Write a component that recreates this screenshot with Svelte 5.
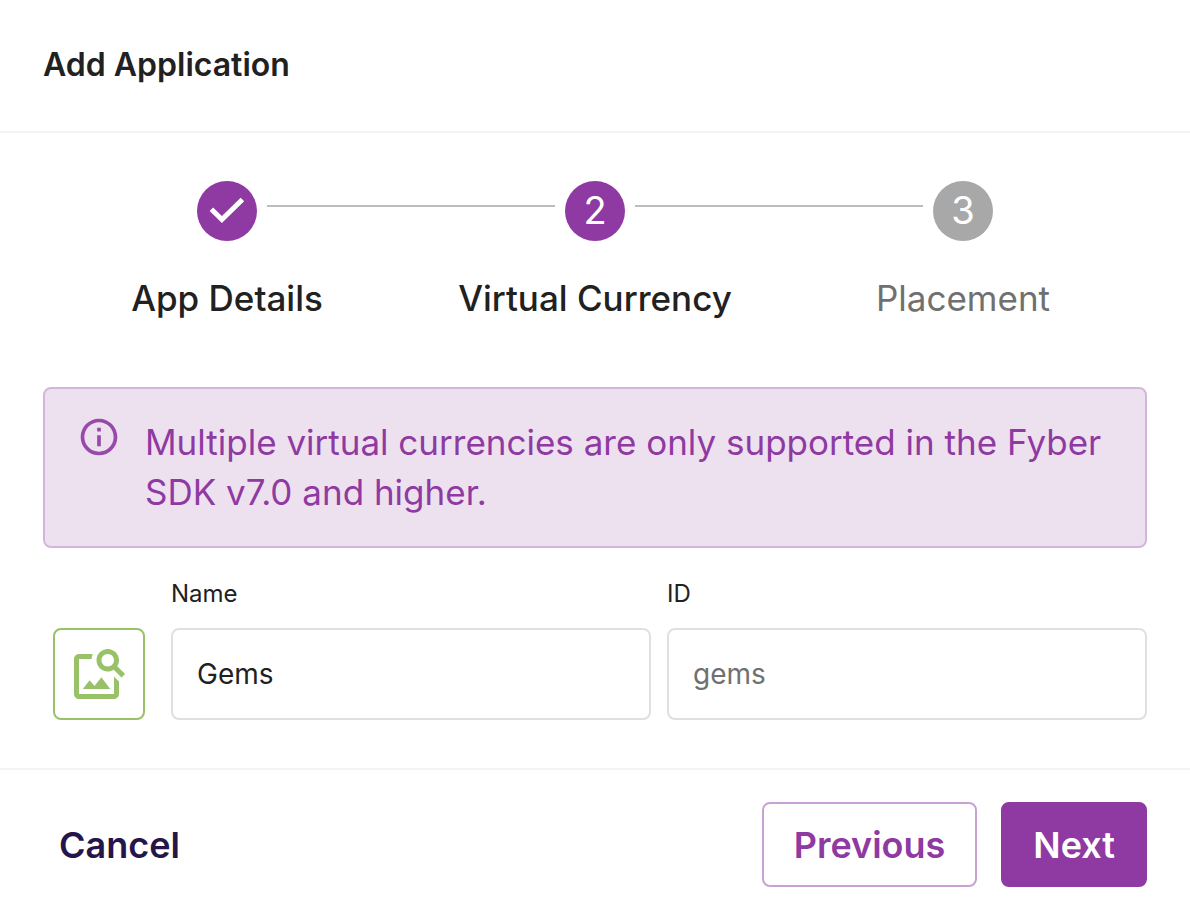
<script lang="ts">
    type Step = { label: string, state: "done" | "active" | "pending" }

    const steps: Step[] = [
        { label: "App Details", state: "done" },
        { label: "Virtual Currency", state: "active" },
        { label: "Placement", state: "pending" },
    ]

    let name = $state("Gems")
    let currencyId = $state("")
</script>

<form class="dialog" onsubmit={(e) => e.preventDefault()}>
    <header>
        <h1>Add Application</h1>
    </header>

    <main>
        <ol class="stepper">
            {#each steps as step, i}
                <li class="step {step.state}">
                    <div class="track">
                        <span class="line" class:hidden={i == 0}></span>
                        <span class="circle">
                            {#if step.state == "done"}
                                <svg viewBox="0 0 48 48" width="48" height="48" aria-hidden="true">
                                    <path class="tick" d="M8.4 23.2 18.9 33.5 39.4 13.5" />
                                </svg>
                            {:else}
                                {i + 1}
                            {/if}
                        </span>
                        <span class="line" class:hidden={i == steps.length - 1}></span>
                    </div>
                    <span class="step-label">{step.label}</span>
                </li>
            {/each}
        </ol>

        <div class="alert" role="note">
            <svg viewBox="0 0 24 24" width="44" height="44" aria-hidden="true">
                <path d="M11 7h2v2h-2zm0 4h2v6h-2zm1-9C6.48 2 2 6.48 2 12s4.48 10 10 10 10-4.48 10-10S17.52 2 12 2zm0 18c-4.41 0-8-3.59-8-8s3.59-8 8-8 8 3.59 8 8-3.59 8-8 8z" />
            </svg>
            <p>Multiple virtual currencies are only supported in the Fyber SDK v7.0 and higher.</p>
        </div>

        <div class="fields">
            <button type="button" class="image-button" aria-label="Choose image">
                <svg viewBox="0 0 24 24" width="60" height="60" aria-hidden="true">
                    <path d="M18 13v7H4V6h5.02c.05-.71.22-1.38.48-2H4c-1.1 0-2 .9-2 2v14c0 1.1.9 2 2 2h14c1.1 0 2-.9 2-2v-5l-2-2zm-1.5 5h-11l2.75-3.53 1.96 2.36 2.75-3.54L16.5 18zm2.8-9.11c.44-.7.7-1.51.7-2.39C20 4.01 17.99 2 15.5 2S11 4.01 11 6.5s2.01 4.5 4.49 4.5c.88 0 1.7-.26 2.39-.7L21 13.42 22.42 12 19.3 8.89zM15.5 9C14.12 9 13 7.88 13 6.5S14.12 4 15.5 4 18 5.12 18 6.5 16.88 9 15.5 9z" />
                </svg>
            </button>
            <div class="field">
                <label for="currency-name">Name</label>
                <input id="currency-name" type="text" bind:value={name} />
            </div>
            <div class="field">
                <label for="currency-id">ID</label>
                <input id="currency-id" type="text" placeholder="gems" bind:value={currencyId} />
            </div>
        </div>
    </main>

    <footer>
        <button type="button" class="btn text">Cancel</button>
        <div class="actions">
            <button type="button" class="btn outlined">Previous</button>
            <button type="submit" class="btn filled">Next</button>
        </div>
    </footer>
</form>

<style>
    :global(body) {
        background: #fff;
    }

    .dialog {
        font-family: Inter, "Liberation Sans", sans-serif;
        color: #212121;
    }

    .dialog * {
        box-sizing: border-box;
    }

    header {
        padding: 45px 43px 46px;
        border-bottom: 2px solid #f4f4f4;
    }

    h1 {
        margin: 0;
        font-size: 32px;
        line-height: 40px;
        font-weight: 600;
    }

    main {
        padding: 48px 43px;
    }

    .stepper {
        display: flex;
        margin: 0 0 64px;
        padding: 0;
        list-style: none;
    }

    .step {
        flex: 1;
        display: flex;
        flex-direction: column;
        align-items: center;
        gap: 32px;
    }

    .track {
        display: flex;
        gap: 10px;
        width: 100%;
    }

    .line {
        flex: 1;
        height: 2px;
        margin-top: 24px;
        background: #bdbdbd;
    }

    .line.hidden {
        visibility: hidden;
    }

    .circle {
        display: flex;
        align-items: center;
        justify-content: center;
        width: 60px;
        height: 60px;
        padding-bottom: 2px;
        border-radius: 50%;
        background: #8e3aa2;
        color: #fff;
        font-size: 38px;
    }

    svg {
        display: block;
        flex: none;
        fill: currentColor;
    }

    .tick {
        fill: none;
        stroke: currentColor;
        stroke-width: 5;
    }

    .step-label {
        font-size: 35px;
        line-height: 50px;
        font-weight: 500;
    }

    .pending .circle {
        background: #a8a8a8;
    }

    .pending .step-label {
        color: #707070;
        font-weight: 400;
    }

    .alert {
        display: flex;
        align-items: flex-start;
        gap: 24px;
        padding: 26px 32px 29px;
        border: 2px solid #d4b6dc;
        border-radius: 8px;
        background: #eee1ef;
        color: #8e3aa2;
    }

    .alert svg {
        opacity: 0.9;
    }

    .alert p {
        margin: 0;
        padding-top: 2px;
        font-size: 35px;
        line-height: 50px;
    }

    .fields {
        display: flex;
        align-items: flex-end;
        gap: 16px;
        margin-top: 30px;
    }

    .image-button {
        display: flex;
        align-items: center;
        justify-content: center;
        flex: none;
        width: 92px;
        height: 92px;
        margin: 0 10px;
        padding: 0;
        border: 2px solid #99c268;
        border-radius: 8px;
        background: #fff;
        color: #99c268;
        cursor: pointer;
    }

    .field {
        flex: 1;
        min-width: 0;
        display: flex;
        flex-direction: column;
        gap: 18px;
    }

    label {
        font-size: 24px;
        line-height: 32px;
    }

    input {
        width: 100%;
        height: 92px;
        padding: 0 24px;
        border: 2px solid #e0e0e0;
        border-radius: 8px;
        background: #fff;
        color: #212121;
        font-family: inherit;
        font-size: 28px;
    }

    input::placeholder {
        color: #707070;
        opacity: 1;
    }

    footer {
        display: flex;
        align-items: center;
        justify-content: space-between;
        padding: 32px 43px 24px;
        border-top: 2px solid #f4f4f4;
    }

    .actions {
        display: flex;
        gap: 24px;
    }

    .btn {
        height: 85px;
        padding: 0 30px;
        border: 2px solid transparent;
        border-radius: 8px;
        background: none;
        font-family: inherit;
        font-size: 36px;
        font-weight: 600;
        cursor: pointer;
    }

    .btn.text {
        padding: 0 14px;
        color: #25154a;
    }

    .btn.outlined {
        border-color: #c9a2d3;
        color: #8e3aa2;
    }

    .btn.filled {
        border-color: #8e3aa2;
        background: #8e3aa2;
        color: #fff;
    }
</style>
